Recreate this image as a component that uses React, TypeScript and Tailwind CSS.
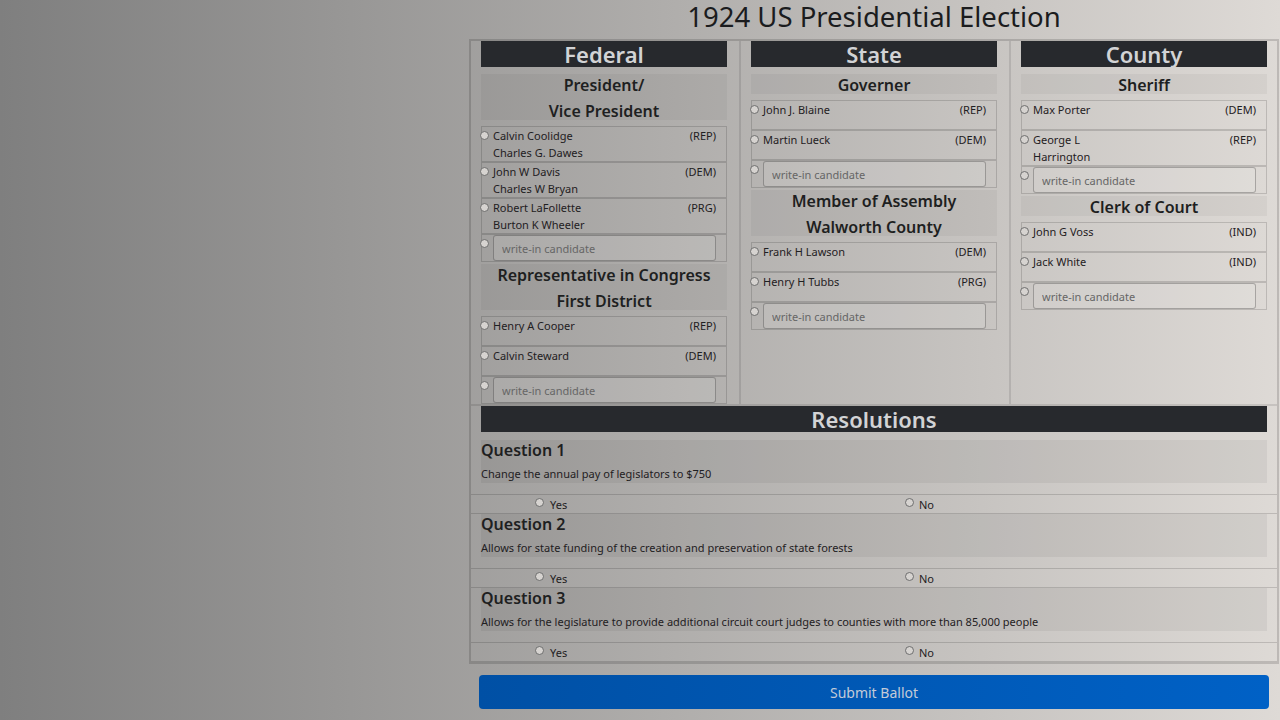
import React from 'react';

type Candidate = { lines: string[]; party: string };
type Race = { title: string[]; candidates: Candidate[] };
type Column = { name: string; races: Race[] };

const columns: Column[] = [
  {
    name: 'Federal',
    races: [
      {
        title: ['President/', 'Vice President'],
        candidates: [
          { lines: ['Calvin Coolidge', 'Charles G. Dawes'], party: '(REP)' },
          { lines: ['John W Davis', 'Charles W Bryan'], party: '(DEM)' },
          { lines: ['Robert LaFollette', 'Burton K Wheeler'], party: '(PRG)' },
        ],
      },
      {
        title: ['Representative in Congress', 'First District'],
        candidates: [
          { lines: ['Henry A Cooper'], party: '(REP)' },
          { lines: ['Calvin Steward'], party: '(DEM)' },
        ],
      },
    ],
  },
  {
    name: 'State',
    races: [
      {
        title: ['Governer'],
        candidates: [
          { lines: ['John J. Blaine'], party: '(REP)' },
          { lines: ['Martin Lueck'], party: '(DEM)' },
        ],
      },
      {
        title: ['Member of Assembly', 'Walworth County'],
        candidates: [
          { lines: ['Frank H Lawson'], party: '(DEM)' },
          { lines: ['Henry H Tubbs'], party: '(PRG)' },
        ],
      },
    ],
  },
  {
    name: 'County',
    races: [
      {
        title: ['Sheriff'],
        candidates: [
          { lines: ['Max Porter'], party: '(DEM)' },
          { lines: ['George L', 'Harrington'], party: '(REP)' },
        ],
      },
      {
        title: ['Clerk of Court'],
        candidates: [
          { lines: ['John G Voss'], party: '(IND)' },
          { lines: ['Jack White'], party: '(IND)' },
        ],
      },
    ],
  },
];

const questions = [
  { title: 'Question 1', text: 'Change the annual pay of legislators to $750' },
  { title: 'Question 2', text: 'Allows for state funding of the creation and preservation of state forests' },
  {
    title: 'Question 3',
    text: 'Allows for the legislature to provide additional circuit court judges to counties with more than 85,000 people',
  },
];

function Radio({ className = '' }: { className?: string }) {
  return (
    <span
      className={
        'inline-block w-[9px] h-[9px] rounded-full border border-[#6e6e6e] bg-[#d6d3d0] ' + className
      }
    />
  );
}

function Bar({ label }: { label: string }) {
  return (
    <div className="h-[26px] bg-[#27292d] text-center text-[22px] leading-[26px] font-semibold text-[#d2d3d5]">
      {label}
    </div>
  );
}

function RaceBlock({ race, first }: { race: Race; first: boolean }) {
  const h = race.title.length === 1 ? 'h-[20px]' : 'h-[46px]';
  return (
    <div>
      <div className={`${h} ${first ? 'mt-[7px]' : 'mt-[2px]'} bg-black/[0.04] text-center`}>
        <div className="relative -top-[2px] text-[16px] leading-[26px] font-semibold text-[#1e1f21]">
          {race.title.map(t => (
            <div key={t}>{t}</div>
          ))}
        </div>
      </div>
      <div className="mt-[6px]">
        {race.candidates.map(c => (
          <div
            key={c.lines[0]}
            className="relative min-h-[30px] border border-black/15 pl-[11px] pr-[10px] flex justify-between text-[11px] leading-[17px] text-[#1f2022]"
          >
            <Radio className="absolute -left-[2px] top-[4px]" />
            <div>
              {c.lines.map(l => (
                <div key={l}>{l}</div>
              ))}
            </div>
            <div>{c.party}</div>
          </div>
        ))}
        <div className="relative border border-black/15 pl-[11px] pr-[10px]">
          <Radio className="absolute -left-[2px] top-[4px]" />
          <input
            placeholder="write-in candidate"
            className="block w-full h-[26px] rounded-[3px] border border-black/25 bg-white/10 px-[8px] text-[11px] text-[#222] placeholder:text-[#666] outline-none"
          />
        </div>
      </div>
    </div>
  );
}

export default function App() {
  return (
    <div className="min-h-screen w-full bg-gradient-to-r from-[#7f7f7f] to-[#dedad6] font-['Noto_Sans','Open_Sans',sans-serif]">
      <div className="flex">
        <div className="w-[469px] shrink-0" />
        <div className="w-[810px]">
          <h1 className="h-[39px] text-center text-[27.5px] leading-[34px] text-[#1b1c1e]">
            1924 US Presidential Election
          </h1>

          <div className="border-2 border-black/15">
            {/* Contest columns */}
            <div className="flex h-[363px]">
              {columns.map((col, i) => (
                <div
                  key={col.name}
                  className={
                    i === 0
                      ? 'w-[268px] pl-[10px] pr-[12px]'
                      : i === 1
                        ? 'w-[270px] border-l-2 border-black/10 pl-[10px] pr-[12px]'
                        : 'w-[268px] border-l-2 border-black/10 pl-[10px] pr-[10px]'
                  }
                >
                  <Bar label={col.name} />
                  {col.races.map((r, j) => (
                    <RaceBlock key={r.title[0]} race={r} first={j === 0} />
                  ))}
                </div>
              ))}
            </div>

            {/* Resolutions */}
            <div className="border-t-2 border-black/10">
              <div className="mx-[10px]">
                <Bar label="Resolutions" />
              </div>
              <div className="pt-[8px]">
                {questions.map(q => (
                  <div key={q.title}>
                    <div className="mx-[10px] h-[43px] bg-black/[0.05]">
                      <div className="text-[16px] leading-[20px] font-semibold text-[#1e1f21]">{q.title}</div>
                      <div className="mt-[7px] text-[11px] leading-[14px] text-[#1f2022]">{q.text}</div>
                    </div>
                    <div className="mt-[11px] h-[20px] border-y border-black/15 flex items-center pl-[64px] text-[11px] text-[#1f2022]">
                      <label className="w-[370px] flex items-center gap-[6px]">
                        <Radio className="-mt-[3px]" />
                        <span className="mt-[2px]">Yes</span>
                      </label>
                      <label className="flex items-center gap-[5px]">
                        <Radio className="-mt-[3px]" />
                        <span className="mt-[2px]">No</span>
                      </label>
                    </div>
                  </div>
                ))}
              </div>
            </div>
          </div>

          <button className="mt-[11px] ml-[10px] w-[790px] h-[34px] rounded-[4px] bg-gradient-to-r from-[#0050a5] to-[#0061c6] text-[14px] text-[#c3cbd8]">
            Submit Ballot
          </button>
        </div>
      </div>
    </div>
  );
}
